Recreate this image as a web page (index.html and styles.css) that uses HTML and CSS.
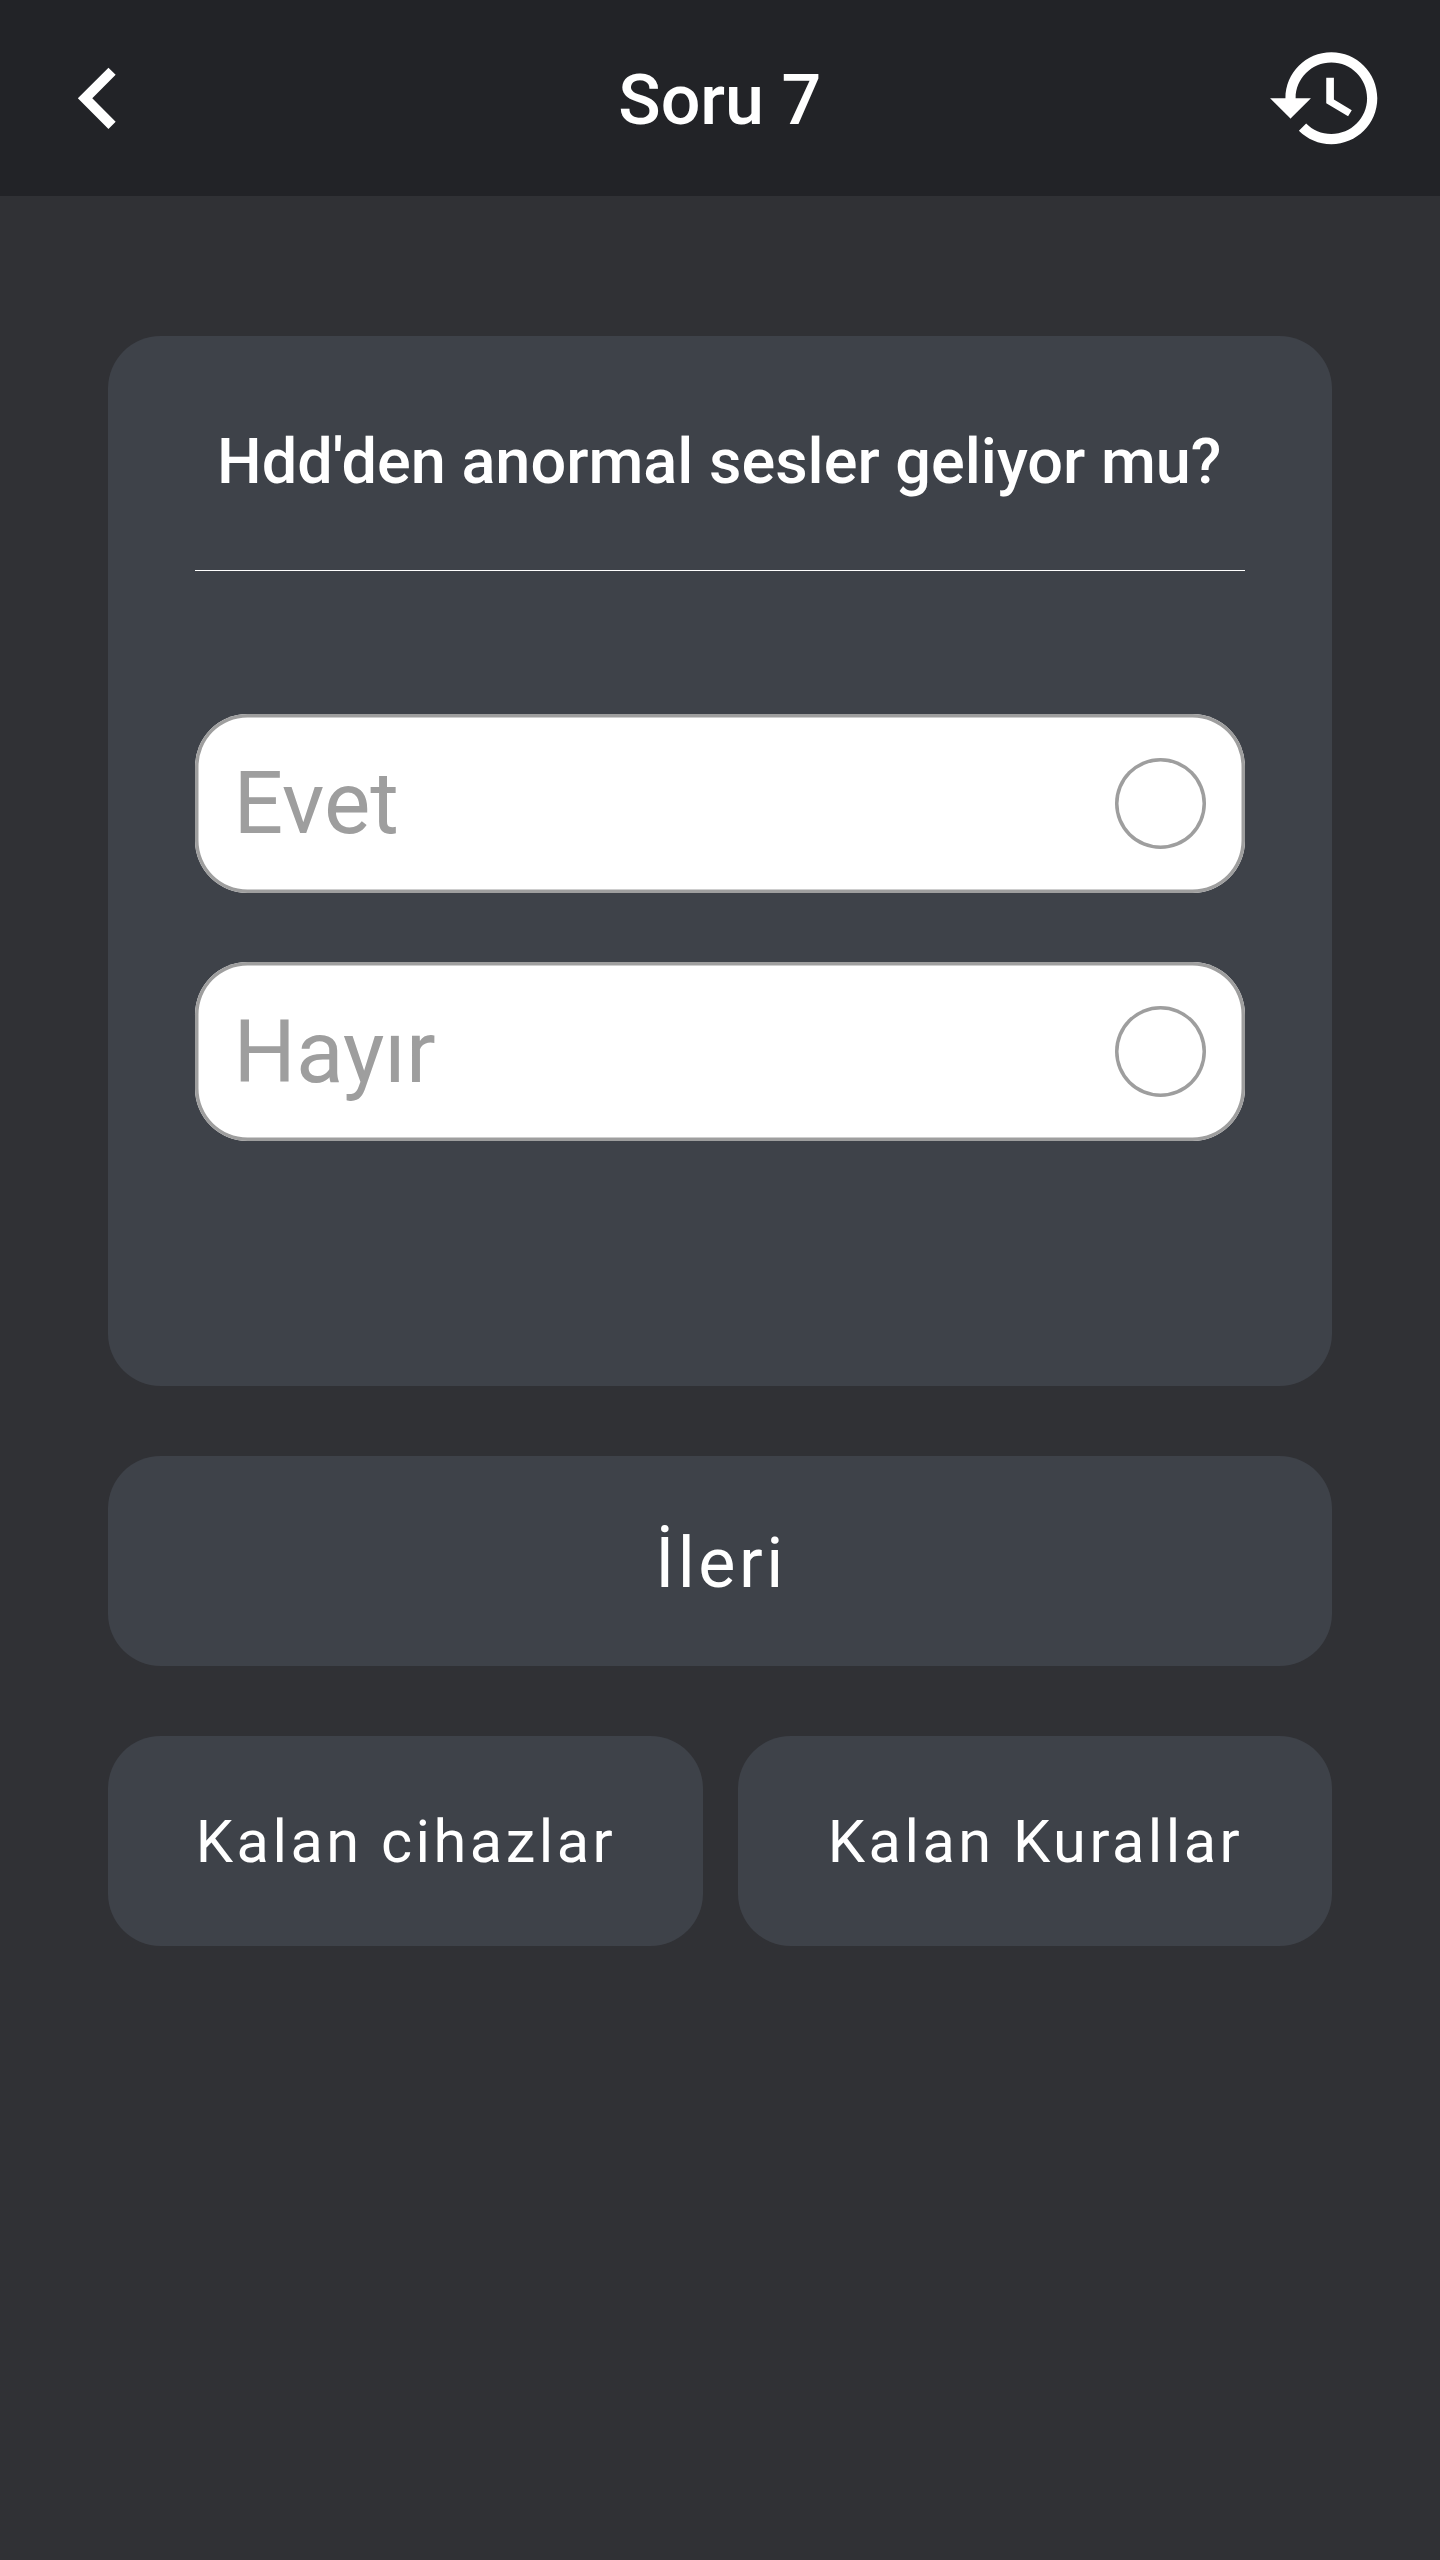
FILE: index.html
```html
<!DOCTYPE html>
<html lang="tr">
<head>
  <meta charset="utf-8">
  <title>Soru 7</title>
  <link rel="stylesheet" href="styles.css">
</head>
<body>
  <header class="app-bar">
    <button class="icon-button" aria-label="Geri">
      <svg class="icon" viewBox="0 0 24 24"><path d="M15.41 7.41 14 6l-6 6 6 6 1.41-1.41L10.83 12z"/></svg>
    </button>
    <h1 class="app-title">Soru 7</h1>
    <button class="icon-button" aria-label="Geçmiş">
      <svg class="icon" viewBox="0 0 24 24"><path d="M13 3c-4.97 0-9 4.03-9 9H1l3.89 3.89.07.14L9 12H6c0-3.87 3.13-7 7-7s7 3.13 7 7-3.13 7-7 7c-1.93 0-3.68-.79-4.94-2.06l-1.42 1.42C8.27 19.99 10.51 21 13 21c4.97 0 9-4.03 9-9s-4.03-9-9-9zm-1 5v5l4.28 2.54.72-1.21-3.5-2.08V8H12z"/></svg>
    </button>
  </header>
  <main class="content">
    <section class="card">
      <h2 class="question">Hdd'den anormal sesler geliyor mu?</h2>
      <div class="options">
        <button class="option"><span>Evet</span><span class="radio"></span></button>
        <button class="option"><span>Hayır</span><span class="radio"></span></button>
      </div>
    </section>
    <button class="button button-next">İleri</button>
    <div class="button-row">
      <button class="button">Kalan cihazlar</button>
      <button class="button">Kalan Kurallar</button>
    </div>
  </main>
</body>
</html>
```

FILE: styles.css
```css
* {
  box-sizing: border-box;
}

body {
  margin: 0;
  min-height: 2560px;
  background: #303135;
  color: #fff;
  font-family: Roboto, sans-serif;
}

button {
  border: 0;
  padding: 0;
  background: none;
  color: inherit;
  font: inherit;
}

.app-bar {
  display: flex;
  align-items: center;
  justify-content: space-between;
  height: 196px;
  padding: 0 52.5px 0.5px 36.5px;
  background: #222327;
}

.icon-button {
  display: flex;
}

.icon {
  width: 122.5px;
  height: 122.5px;
  fill: #fff;
}

.app-title {
  margin: 0 0 0 15.5px;
  padding-top: 3.5px;
  font-size: 70px;
  font-weight: 500;
  line-height: 82px;
}

.content {
  display: flex;
  flex-direction: column;
  gap: 70px;
  width: 1224px;
  margin: 0 auto;
  padding-top: 140px;
}

.card {
  height: 1050px;
  padding: 89px 87px 0;
  border-radius: 52.5px;
  background: #3e4249;
}

.question {
  margin: 0;
  padding-bottom: 71px;
  border-bottom: 1px solid #fff;
  font-size: 63px;
  font-weight: 500;
  line-height: 74px;
  text-align: center;
  text-indent: -1.5px;
  white-space: nowrap;
}

.options {
  display: flex;
  flex-direction: column;
  gap: 69.75px;
  padding-top: 143px;
}

.option {
  display: flex;
  align-items: center;
  justify-content: space-between;
  height: 178.5px;
  padding: 0 38.75px 0 38.5px;
  border-radius: 52.5px;
  background: #fff;
  box-shadow: inset 0 0 0 3.5px #9e9e9e;
  color: #9e9e9e;
  font-size: 87.5px;
}

.option + .option {
  padding-top: 0.5px;
}

.radio {
  width: 91px;
  height: 91px;
  border-radius: 50%;
  box-shadow: inset 0 0 0 3.5px #9e9e9e;
}

.button {
  flex: 1;
  height: 210px;
  padding: 2px 0 0 1.5px;
  border-radius: 52.5px;
  background: #3e4249;
  font-size: 59.5px;
  letter-spacing: 3.5px;
}

.button-next {
  flex: none;
  padding: 4px 0 0 2px;
  font-size: 70px;
}

.button-row {
  display: flex;
  gap: 35px;
}
```
